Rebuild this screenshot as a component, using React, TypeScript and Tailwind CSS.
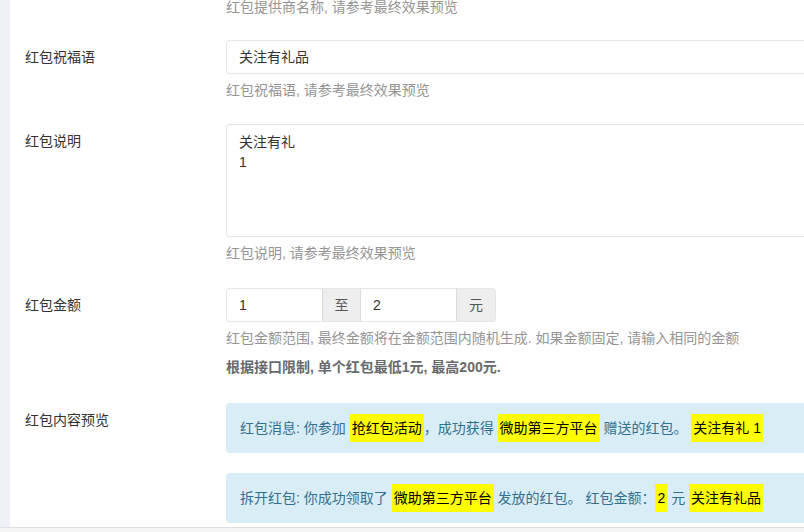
const font = { fontFamily: '"Liberation Sans", "Noto Sans CJK SC", sans-serif' };

const Label = ({ children }: { children: string }) => (
    <div className="w-[216px] shrink-0 pl-[15px] pt-[7px] leading-[20px] text-[#333]">{children}</div>
);

const Help = ({ children, className = '' }: { children: React.ReactNode; className?: string }) => (
    <div className={`leading-[20px] text-[#959595] ${className}`}>{children}</div>
);

const Mark = ({ children }: { children: string }) => (
    <span className="inline-block bg-[#ffff00] text-black px-[2px] py-[4px] -my-[4px]">{children}</span>
);

export default function App() {
    return (
        <div className="w-[804px] h-[532px] overflow-hidden bg-[#f5f5f5] text-[14px]" style={font}>
            <div className="flex h-[528px] border-b border-[#e0e0e0]">
                <div className="w-[10px] shrink-0 bg-[#eef1f6]" />
                <div className="flex-1 bg-white overflow-hidden">
                    <div className="w-[1000px] flex flex-col">
                        <div className="pl-[216px] leading-[14px] text-[#959595]">红包提供商名称, 请参考最终效果预览</div>

                        {/* 祝福语 */}
                        <div className="flex mt-[26px]">
                            <Label>红包祝福语</Label>
                            <div className="flex-1">
                                <div className="h-[34px] border border-[#e5e6e7] rounded-[3px] px-[12px] leading-[32px] text-[#333]">关注有礼品</div>
                                <Help className="mt-[6px]">红包祝福语, 请参考最终效果预览</Help>
                            </div>
                        </div>

                        {/* 说明 */}
                        <div className="flex mt-[24px]">
                            <Label>红包说明</Label>
                            <div className="flex-1">
                                <div className="h-[113px] border border-[#e5e6e7] rounded-[3px] px-[12px] py-[7px] leading-[20px] text-[#333]">
                                    <div>关注有礼</div>
                                    <div>1</div>
                                </div>
                                <Help className="mt-[6px]">红包说明, 请参考最终效果预览</Help>
                            </div>
                        </div>

                        {/* 金额 */}
                        <div className="flex mt-[25px]">
                            <Label>红包金额</Label>
                            <div className="flex-1">
                                <div className="flex h-[34px] w-[270px] border border-[#e5e6e7] rounded-[3px] overflow-hidden text-[#333]">
                                    <div className="w-[95px] px-[12px] leading-[32px]">1</div>
                                    <div className="w-[39px] bg-[#eee] border-x border-[#dcdcdc] text-center leading-[32px] text-[#555]">至</div>
                                    <div className="w-[95px] px-[12px] leading-[32px]">2</div>
                                    <div className="flex-1 bg-[#eee] border-l border-[#dcdcdc] text-center leading-[32px] text-[#555]">元</div>
                                </div>
                                <Help className="mt-[6px]">红包金额范围, 最终金额将在金额范围内随机生成. 如果金额固定, 请输入相同的金额</Help>
                                <div className="mt-[9px] leading-[20px] font-bold text-[#676a6c]">根据接口限制, 单个红包最低1元, 最高200元.</div>
                            </div>
                        </div>

                        {/* 预览 */}
                        <div className="flex mt-[26px]">
                            <Label>红包内容预览</Label>
                            <div className="flex-1">
                                <div className="h-[50px] bg-[#d9edf7] rounded-[4px] px-[14px] py-[15px] leading-[20px] text-[#31708f] whitespace-nowrap">
                                    红包消息: 你参加 <Mark>抢红包活动</Mark>，成功获得 <Mark>微助第三方平台</Mark> 赠送的红包。 <Mark>关注有礼 1</Mark>
                                </div>
                                <div className="mt-[20px] h-[50px] bg-[#d9edf7] rounded-[4px] px-[14px] py-[15px] leading-[20px] text-[#31708f] whitespace-nowrap">
                                    拆开红包: 你成功领取了 <Mark>微助第三方平台</Mark> 发放的红包。 红包金额：<Mark>2</Mark> 元 <Mark>关注有礼品</Mark>
                                </div>
                            </div>
                        </div>
                    </div>
                </div>
            </div>
        </div>
    );
}
